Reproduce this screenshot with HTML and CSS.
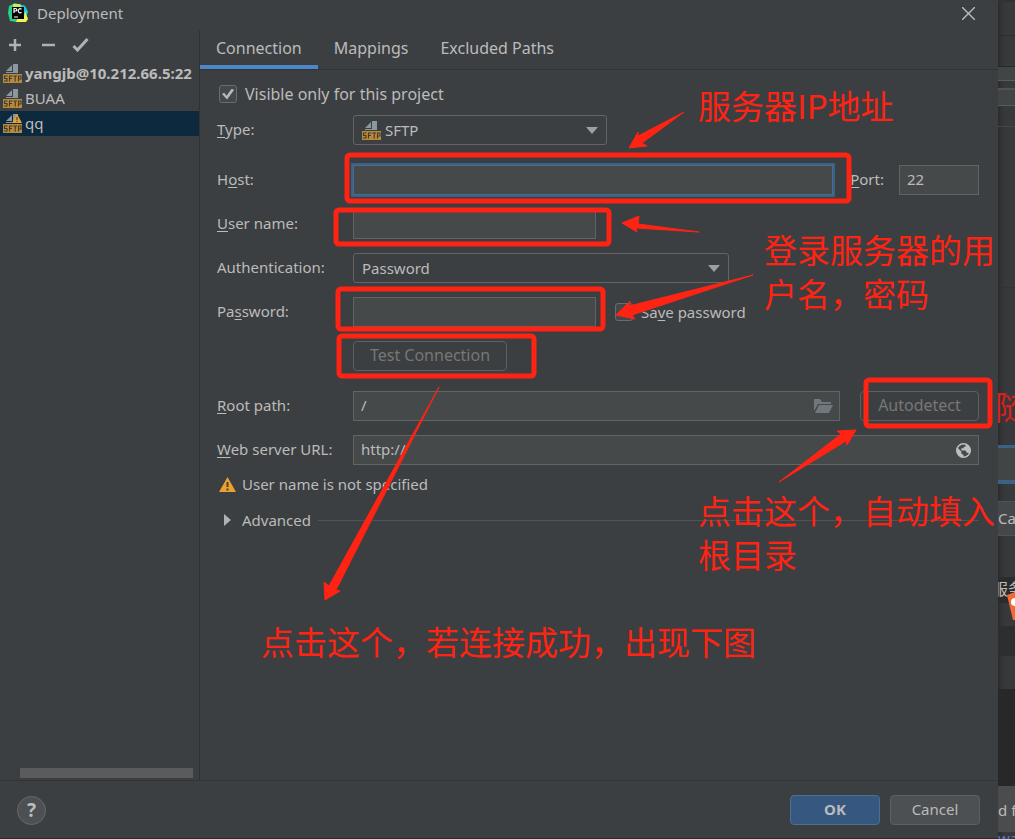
FILE: index.html
```html
<!DOCTYPE html>
<html lang="en">
<head>
<meta charset="utf-8">
<title>Deployment</title>
<link rel="stylesheet" href="styles.css">
</head>
<body>
<svg class="defs" aria-hidden="true">
  <symbol id="sftp" viewBox="0 0 19 19">
    <path d="M3 7 9 1v6zM10 0h5v9H3V8h7z" fill="#8b979e"/>
    <rect y="10" width="19" height="9" fill="#b58a3c"/>
    <path d="M4.500 12H1.500v2.500H4V17H1M6.500 17.500V12H9.500M6.500 14.500h2.500M10.500 12h3.500M12.200 12v5.500M15.500 17.500V12H18v3h-2.500" fill="none" stroke="#433a29" stroke-width="1.100"/>
  </symbol>
  <symbol id="warn" viewBox="0 0 17 15">
    <path d="M8.500 0 17 15H0z" fill="#eba12f"/>
    <path d="M7.500 5h2v5h-2zM7.500 11.500h2v2h-2z" fill="#45423a"/>
  </symbol>
  <symbol id="tick" viewBox="0 0 16 14">
    <path d="m1 8 4 4L15 1" fill="none" stroke="#afb1b3" stroke-width="3"/>
  </symbol>
</svg>
<div class="screen">
  <main class="dialog">
    <header class="titlebar">
      <svg class="app-icon" viewBox="0 0 20 20" aria-hidden="true">
        <path d="M1 3 7 0l5 2 5 1 3 6-2 5-1 4-8 1-7-1-2-8z" fill="#24d38b"/>
        <path d="m11 1 6 2 3 6-2 3-6-4z" fill="#17c7e8"/>
        <path d="m5 1 7 0 2 4H5z" fill="#c8ee55"/>
        <path d="m17 8 3 8-2 3-10 0 2-4 6-1z" fill="#f3f355"/>
        <rect x="4" y="4" width="12" height="12" fill="#050505"/>
        <path d="M6 10V5.500h1.500a1.200 1.200 0 0 1 0 2.500H6M13.500 6.300a2 2 0 1 0 0 3M6 14h4" fill="none" stroke="#fff" stroke-width="1.200"/>
      </svg>
      <h1>Deployment</h1>
      <button class="close" aria-label="Close"><svg viewBox="0 0 12 12"><path d="m0 0 12 12M12 0 0 12" stroke="#b9bbbd" stroke-width="1.300"/></svg></button>
    </header>
    <div class="body">
      <aside class="sidebar">
        <div class="toolbar">
          <button aria-label="Add"><svg viewBox="0 0 14 14"><path d="M7 1v12M1 7h12" stroke="#afb1b3" stroke-width="2.500"/></svg></button>
          <button aria-label="Remove"><svg viewBox="0 0 14 14"><path d="M1 7h13" stroke="#afb1b3" stroke-width="2.500"/></svg></button>
          <button aria-label="Use as default" class="wide"><svg><use href="#tick"/></svg></button>
        </div>
        <ul class="servers">
          <li class="default"><svg class="sftp"><use href="#sftp"/></svg><span>yangjb@10.212.66.5:22</span></li>
          <li><svg class="sftp"><use href="#sftp"/></svg><span>BUAA</span></li>
          <li class="selected"><span class="sftp"><svg class="sftp"><use href="#sftp"/></svg><svg class="badge"><use href="#warn"/></svg></span><span>qq</span></li>
        </ul>
        <div class="scrollbar"></div>
      </aside>
      <section class="content">
        <nav class="tabs" role="tablist">
          <button role="tab" aria-selected="true" class="active">Connection</button>
          <button role="tab">Mappings</button>
          <button role="tab">Excluded Paths</button>
        </nav>
        <form class="form">
          <label class="check"><input type="checkbox" checked>Visible only for this project</label>

          <label for="type"><u>T</u>ype:</label>
          <div class="line">
            <div class="combo combo-type">
              <svg class="sftp"><use href="#sftp"/></svg>
              <select id="type"><option>SFTP</option></select>
              <svg class="arrow" viewBox="0 0 12 7"><path d="M0 0h12L6 7z"/></svg>
            </div>
          </div>

          <label for="host" class="spaced">H<u>o</u>st:</label>
          <div class="line spaced">
            <input id="host" class="field grow focused" type="text">
            <label for="port" class="port"><u>P</u>ort:</label>
            <input id="port" class="field field-port" type="text" value="22">
          </div>

          <label for="user"><u>U</u>ser name:</label>
          <div class="line"><input id="user" class="field field-short" type="text"></div>

          <label for="auth">Authentication:</label>
          <div class="line">
            <div class="combo combo-auth">
              <select id="auth"><option>Password</option></select>
              <svg class="arrow" viewBox="0 0 12 7"><path d="M0 0h12L6 7z"/></svg>
            </div>
          </div>

          <label for="pass">Pa<u>s</u>sword:</label>
          <div class="line">
            <input id="pass" class="field field-short" type="password">
            <label class="check save"><input type="checkbox"><span>Sa<u>v</u>e password</span></label>
          </div>

          <div class="line second"><button type="button" class="btn btn-test" disabled>Test Connection</button></div>

          <label for="root" class="spaced"><u>R</u>oot path:</label>
          <div class="line spaced">
            <div class="with-icon grow">
              <input id="root" class="field" type="text" value="/">
              <svg class="folder" viewBox="0 0 19 14"><path d="M0 0h6l2 3h9v2H4L0 12zM5 6h14l-4 8H1z" fill="#6f787c"/></svg>
            </div>
            <button type="button" class="btn btn-auto" disabled>Autodetect</button>
          </div>

          <label for="url"><u>W</u>eb server URL:</label>
          <div class="line">
            <div class="with-icon grow">
              <input id="url" class="field" type="text" value="http://">
              <svg class="globe" viewBox="0 0 14 14"><circle cx="7" cy="7" r="6.300" fill="none" stroke="#bcbec0" stroke-width="1.400"/><path d="M1 4l4 4v2l2 1v2.500C2 13 0 9 1 4zM7 1h2v2L7 4v1H5v2h4l1 2h1l2 1C15 4 11 0 7 1z" fill="#bcbec0"/></svg>
            </div>
          </div>

          <p class="warning"><svg><use href="#warn"/></svg>User name is not specified</p>
          <div class="advanced"><button type="button"><svg viewBox="0 0 7 12"><path d="M0 0v12l7-6z" fill="#afb1b3"/></svg>Advanced</button><hr></div>
        </form>
      </section>
    </div>
    <footer class="footer">
      <button class="help" aria-label="Help">?</button>
      <button class="btn ok">OK</button>
      <button class="btn cancel">Cancel</button>
    </footer>
  </main>
  <aside class="behind">
    <div class="b-title"></div>
    <div class="b-bar"></div>
    <div class="b-row1"></div>
    <div class="b-row2"></div>
    <div class="b-gap"></div>
    <div class="b-panel"></div>
    <div class="b-panel2">随</div>
    <div class="b-field"></div>
    <div class="b-button">Ca</div>
    <div class="b-panel3"></div>
    <div class="b-tag">服务</div>
    <div class="b-stripe"></div>
    <div class="b-dark1"></div>
    <div class="b-panel4"></div>
    <div class="b-dark2"></div>
    <div class="b-status">d f</div>
    <div class="b-link">way</div>
    <svg class="logo" viewBox="0 0 8 30"><path d="M0 5 8 2v28H6z" fill="#f26a35"/><circle cx="8" cy="12" r="4" fill="#fff"/></svg>
  </aside>

  <svg class="marks" viewBox="0 0 1015 839" aria-hidden="true">
    <g fill="none" stroke="#ff2314" stroke-width="5">
      <rect x="347" y="155" width="502" height="46" rx="3"/>
      <rect x="336" y="210" width="273" height="34" rx="3"/>
      <rect x="338" y="289" width="265" height="40" rx="3"/>
      <rect x="339" y="336" width="195" height="40" rx="3"/>
      <rect x="866" y="380" width="124" height="46" rx="3"/>
    </g>
    <g fill="#ff2314" stroke="#ff2314" stroke-linejoin="round">
      <path d="m684 112-46 24 0-4-9 16 18-2-5-3q22-16 42-31z"/>
      <path d="m699 232-61-8 1-8-17 7 15 9-1-4z"/>
      <path d="m753 275-124 31 1-5-14 14 19 4-3-4z"/>
      <path d="m439 387-110 199-5-4 1 18 15-9-4-1z"/>
      <path d="m779 482 62-48-4-3 19-1-9 15-1-4z"/>
    </g>
  </svg>
  <p class="note note-host">服务器IP地址</p>
  <p class="note note-login">登录服务器的用<br>户名，密码</p>
  <p class="note note-auto">点击这个，自动填入<br>根目录</p>
  <p class="note note-test">点击这个，若连接成功，出现下图</p>
</div>
</body>
</html>
```
FILE: styles.css
```css
* { box-sizing: border-box; }
body {
  margin: 0;
  background: #2b2b2b;
  color: #bbbbbb;
  font: 15px/20px "Noto Sans", "Noto Sans CJK SC", sans-serif;
}
button, input, select { font: inherit; color: inherit; }
button { padding: 0; border: 0; background: none; }
h1, p, ul { margin: 0; padding: 0; font-weight: 400; }
h1 { font-size: 15px; }
svg { display: block; flex: none; }
u { text-underline-offset: 2px; }
.defs { position: absolute; width: 0; height: 0; }
.grow { flex: 1; min-width: 0; }

.screen { position: relative; display: flex; min-height: 100vh; overflow: hidden; }
.dialog {
  flex: 1;
  min-width: 0;
  display: flex;
  flex-direction: column;
  background: #3c3f41;
  border-bottom: 1px solid #2a2a2c;
}
.titlebar { display: flex; align-items: center; height: 30px; padding: 0 23px 4px 8px; gap: 9px; }
.app-icon { width: 20px; height: 20px; }
.close { margin-left: auto; }
.close svg { width: 13px; height: 13px; }

.body { flex: 1; display: flex; min-height: 0; border-bottom: 1px solid #323435; }
.sidebar { width: 200px; display: flex; flex-direction: column; border-right: 1px solid #2f3133; }
.toolbar { display: flex; align-items: center; gap: 19px; height: 31px; padding: 0 8px 2px; }
.toolbar svg { width: 14px; height: 14px; }
.toolbar .wide { margin-left: -2px; }
.toolbar .wide svg { width: 17px; height: 14px; }
.servers { list-style: none; white-space: nowrap; }
.servers li { display: flex; align-items: center; height: 25px; padding-left: 3px; gap: 3px; overflow: hidden; }
.servers li > span:last-child { padding-bottom: 2px; }
.servers .default { font-weight: 700; }
.servers .selected { background: #0d293e; }
.sftp { position: relative; width: 19px; height: 19px; flex: none; }
.badge { position: absolute; left: 9px; top: 0; width: 10px; height: 9px; }
.scrollbar { height: 10px; margin: auto 6px 2px 20px; background: #5a5b5c; }

.content { flex: 1; min-width: 0; }
.tabs { display: flex; height: 40px; border-bottom: 1px solid #323435; }
.tabs button { padding: 0 16px; font-size: 16px; border-bottom: 4px solid transparent; }
.tabs .active { border-bottom-color: #4a88c7; }

.form {
  display: grid;
  grid-template-columns: 136px 1fr;
  row-gap: 14px;
  align-items: center;
  padding: 14px 19px 0 17px;
}
.form > label { padding-bottom: 2px; }
.line { display: flex; align-items: center; height: 30px; }
.spaced { margin-top: 6px; }
.second { grid-column: 2; }
.check { display: flex; align-items: center; gap: 8px; }
.form > .check { grid-column: 1 / -1; height: 22px; margin: 0 0 -5px 2px; font-size: 16px; }
.check input {
  appearance: none;
  width: 18px;
  height: 18px;
  margin: 0;
  border: 1px solid #6b6b6b;
  border-radius: 3px;
  background: #43494a;
  display: grid;
  place-items: center;
}
.check input:checked::before {
  content: "";
  width: 12px;
  height: 11px;
  background: #b8babb;
  clip-path: polygon(0 50%, 18% 38%, 38% 65%, 82% 0, 100% 14%, 42% 100%);
}
.save { margin-left: 19px; }

.field {
  width: 100%;
  height: 30px;
  padding: 0 7px 2px;
  border: 1px solid #646464;
  border-radius: 0;
  background: #45494a;
  outline: 0;
}
.focused { border-color: #466d94; box-shadow: 0 0 0 2px #3d6185; }
.port { margin: 0 15px 0 17px; padding-bottom: 2px; }
.field-port { width: 80px; }
.field-short { width: 243px; }
.combo {
  position: relative;
  display: flex;
  align-items: center;
  height: 30px;
  border: 1px solid #646464;
  border-radius: 3px;
}
.combo select {
  appearance: none;
  flex: 1;
  height: 28px;
  padding: 0 8px 1px;
  border: 0;
  background: transparent;
  outline: 0;
}
.combo-type { width: 254px; padding-left: 8px; }
.combo-type select { padding-left: 4px; }
.combo-auth { width: 376px; }
.arrow { position: absolute; right: 8px; width: 12px; height: 7px; fill: #9da0a2; pointer-events: none; }
.with-icon { position: relative; display: flex; align-items: center; }
.folder { position: absolute; right: 7px; width: 19px; height: 14px; }
.globe { position: absolute; right: 8px; width: 15px; height: 15px; }

.btn { height: 30px; padding-bottom: 2px; border: 1px solid #5e6060; border-radius: 4px; }
.btn:disabled { color: #777777; font-size: 16px; }
.btn-test { width: 154px; }
.btn-auto { width: 119px; margin-left: 20px; }
.warning { grid-column: 1 / -1; display: flex; align-items: center; gap: 6px; height: 20px; margin: -5px 0 0 2px; }
.warning svg { width: 17px; height: 15px; }
.advanced { grid-column: 1 / -1; display: flex; align-items: center; gap: 7px; margin: 2px 0 0 7px; }
.advanced button { display: flex; align-items: center; gap: 11px; }
.advanced svg { width: 7px; height: 12px; }
.advanced hr { flex: 1; margin: 0; border: 0; border-top: 1px solid #515355; }

.footer { display: flex; align-items: center; gap: 10px; height: 57px; padding: 1px 18px 0 17px; }
.help {
  width: 29px;
  height: 29px;
  margin-right: auto;
  border: 1px solid #666a6b;
  border-radius: 50%;
  background: #4c5052;
  font-size: 19px;
  font-weight: 700;
}
.ok, .cancel { width: 90px; background: #4c5052; }
.ok { border-color: #4c708c; background: #365880; font-weight: 700; }

.behind {
  position: relative;
  width: 17px;
  overflow: hidden;
  white-space: nowrap;
  background: #37393b;
  box-shadow: inset 5px 0 5px -3px #28292a;
}
.b-title { height: 36px; border-top: 2px solid #303234; border-bottom: 1px solid #2b2d2f; }
.b-bar { height: 31px; border-bottom: 1px solid #262829; }
.b-row1 { height: 14px; background: #414546; border-bottom: 1px solid #595b5c; }
.b-row2 { height: 18px; margin-top: 7px; background: #414546; border-top: 2px solid #505253; border-bottom: 1px solid #595b5c; }
.b-gap { height: 21px; border-bottom: 1px solid #474747; }
.b-panel { height: 161px; border-bottom: 1px solid #303234; }
.b-panel2 { height: 157px; padding-top: 102px; color: #d9201a; font-size: 33px; line-height: 36px; text-indent: -3px; }
.b-field { height: 39px; background: #414546; border: solid #3d6185; border-width: 3px 0 4px; }
.b-button { height: 35px; margin-top: 17px; background: #45484a; border: solid #505253; border-width: 1px 0; line-height: 33px; }
.b-panel3 { height: 41px; }
.b-tag { height: 26px; background: #2b2b2b; line-height: 24px; font-size: 16px; text-indent: -6px; }
.b-stripe { height: 23px; }
.b-dark1 { height: 30px; background: #2d2e30; }
.b-panel4 { height: 33px; }
.b-dark2 { height: 97px; background: #282828; }
.b-status { height: 46px; background: #4a4c4e; line-height: 48px; }
.b-link { height: 7px; color: #4a80d8; overflow: hidden; line-height: 12px; }
.logo { position: absolute; right: 0; top: 590px; width: 8px; height: 30px; }

.marks { position: absolute; left: 0; top: 0; width: 1015px; height: 839px; pointer-events: none; }
.note { position: absolute; color: #ff2314; font: 33px/44px "Noto Sans CJK SC", sans-serif; white-space: nowrap; }
.note-host { left: 698px; top: 83px; }
.note-login { left: 764px; top: 227px; }
.note-auto { left: 698px; top: 488px; }
.note-test { left: 261px; top: 619px; }
```
